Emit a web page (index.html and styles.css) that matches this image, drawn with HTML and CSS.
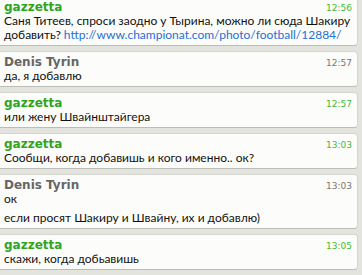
FILE: index.html
```html
<!DOCTYPE html>
<html>
<head>
  <meta charset="UTF-8">
  <title>Chat</title>
  <link rel="stylesheet" href="styles.css">
</head>
<body>
<div class="chat">
  <div class="msg mine">
    <div class="head"><span class="name">gazzetta</span><span class="time">12:56</span></div>
    <p>Саня Титеев, спроси заодно у Тырина, можно ли сюда Шакиру добавить? <a href="#">http://www.championat.com/photo/football/12884/</a></p>
  </div>
  <div class="msg">
    <div class="head"><span class="name">Denis Tyrin</span><span class="time">12:57</span></div>
    <p>да, я добавлю</p>
  </div>
  <div class="msg mine">
    <div class="head"><span class="name">gazzetta</span><span class="time">12:57</span></div>
    <p>или жену Швайнштайгера</p>
  </div>
  <div class="msg mine">
    <div class="head"><span class="name">gazzetta</span><span class="time">13:03</span></div>
    <p>Сообщи, когда добавишь и кого именно.. ок?</p>
  </div>
  <div class="msg">
    <div class="head"><span class="name">Denis Tyrin</span><span class="time">13:03</span></div>
    <p>ок</p>
    <p>если просят Шакиру и Швайну, их и добавлю)</p>
  </div>
  <div class="msg mine">
    <div class="head"><span class="name">gazzetta</span><span class="time">13:05</span></div>
    <p>скажи, когда добьавишь</p>
  </div>
</div>
</body>
</html>
```

FILE: styles.css
```css
body {
  margin: 0;
  background: #e4e4de;
  font-family: Lato, "DejaVu Sans", sans-serif;
  font-size: 12px;
  color: #111;
}

.chat {
  display: flex;
  flex-direction: column;
  gap: 5px;
  margin-top: -4px;
  width: 358px;
}

.msg {
  background: #fcfcfa;
  border: 1px solid #d6d6d1;
  border-left: none;
  border-bottom-color: #bdbdb8;
  border-radius: 0 4px 4px 0;
  padding: 3px 5px 3px 4px;
}

.head {
  display: flex;
  justify-content: space-between;
  align-items: baseline;
  height: 14px;
  line-height: 15px;
}

.name {
  font-family: "DejaVu Sans", sans-serif;
  font-size: 12px;
  font-weight: bold;
  color: #666;
}

.time {
  font-family: "DejaVu Sans", sans-serif;
  font-size: 9px;
  color: #777;
}

.mine .name {
  color: #2fa51f;
}

.mine .time {
  color: #47b83a;
}

.msg p {
  margin: 0;
  line-height: 14px;
}

.msg p + p {
  margin-top: 5px;
}

a {
  color: #2470d6;
  text-decoration: none;
}
```
